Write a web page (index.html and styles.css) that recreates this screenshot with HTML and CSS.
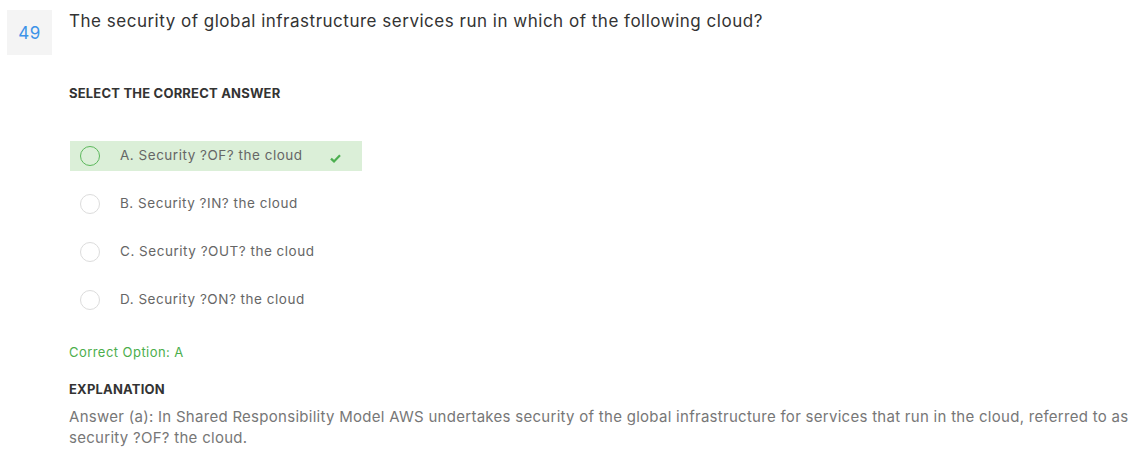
FILE: index.html
```html
<!DOCTYPE html>
<html>
<head>
<meta charset="utf-8">
<link rel="stylesheet" href="styles.css">
</head>
<body>
<div class="question">
  <div class="num">49</div>
  <div class="content">
    <h2 class="q-text">The security of global infrastructure services run in which of the following cloud?</h2>
    <h4 class="label select-label">SELECT THE CORRECT ANSWER</h4>
    <ul class="options">
      <li class="option correct">
        <span class="radio"></span>
        <span class="opt-text">A. Security ?OF? the cloud</span>
        <svg class="check" width="11" height="9" viewBox="0 0 11 9"><path d="M1 4.6 L4 7.4 L10 1.2" fill="none" stroke="#4caf50" stroke-width="2.2"/></svg>
      </li>
      <li class="option">
        <span class="radio"></span>
        <span class="opt-text">B. Security ?IN? the cloud</span>
      </li>
      <li class="option">
        <span class="radio"></span>
        <span class="opt-text">C. Security ?OUT? the cloud</span>
      </li>
      <li class="option">
        <span class="radio"></span>
        <span class="opt-text">D. Security ?ON? the cloud</span>
      </li>
    </ul>
    <p class="correct-option">Correct Option: A</p>
    <h4 class="label expl-label">EXPLANATION</h4>
    <p class="explanation">Answer (a): In Shared Responsibility Model AWS undertakes security of the global infrastructure for services that run in the cloud, referred to as security ?OF? the cloud.</p>
  </div>
</div>
</body>
</html>
```
FILE: styles.css
```css
body {
  margin: 0;
  background: #fff;
  font-family: Inter, "DejaVu Sans", sans-serif;
}
.question {
  display: flex;
  gap: 17px;
  padding: 10px 7px;
}
.num {
  flex: none;
  width: 45px;
  height: 45px;
  background: #f4f4f4;
  color: #3d93e8;
  font-size: 17px;
  display: flex;
  align-items: center;
  justify-content: center;
  letter-spacing: 0.6px;
}
.content {
  flex: 1;
  min-width: 0;
}
.q-text {
  margin: 0;
  font-size: 17px;
  font-weight: 400;
  line-height: 22px;
  color: #333;
  letter-spacing: 0.51px;
}
.label {
  margin: 0;
  font-size: 13px;
  font-weight: 700;
  color: #333;
  line-height: 16px;
  letter-spacing: 0.2px;
}
.select-label {
  margin-top: 53px;
}
.options {
  list-style: none;
  margin: 40px 0 0 1px;
  padding: 0;
  display: flex;
  flex-direction: column;
  gap: 18px;
}
.option {
  display: flex;
  align-items: center;
  height: 30px;
  width: 292px;
  padding-left: 10px;
  box-sizing: border-box;
}
.option.correct {
  background: #dbefd8;
}
.radio {
  flex: none;
  width: 20px;
  height: 20px;
  border-radius: 50%;
  border: 1px solid #dcdcdc;
  box-sizing: border-box;
  background: #fff;
}
.correct .radio {
  border-color: #5cb85c;
  background: transparent;
}
.opt-text {
  margin-left: 20px;
  font-size: 13.5px;
  color: #666;
  letter-spacing: 0.52px;
  position: relative;
  top: -1px;
}
.check {
  margin-left: 27px;
  margin-top: 4px;
}
.correct-option {
  margin: 29px 0 0;
  font-size: 13px;
  line-height: 16px;
  color: #4cae4c;
  letter-spacing: 0.45px;
}
.expl-label {
  margin-top: 21px;
}
.explanation {
  margin: 9px 0 0;
  font-size: 15px;
  line-height: 21px;
  color: #777;
  letter-spacing: 0.28px;
}
```
